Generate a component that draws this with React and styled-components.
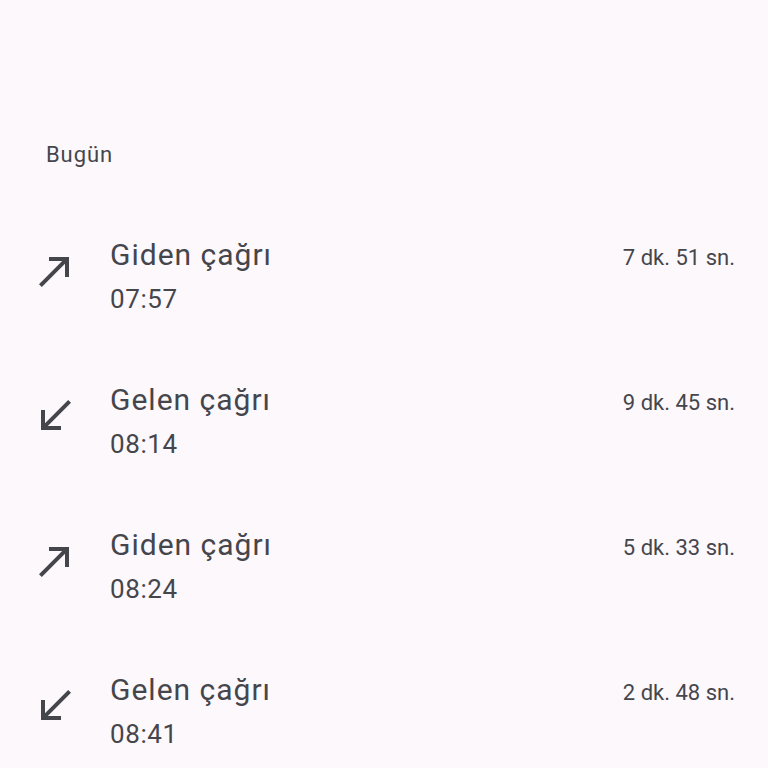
import React from 'react'
import styled, { createGlobalStyle } from 'styled-components'

const calls = [
    { type: 'out', label: 'Giden çağrı', time: '07:57', duration: '7 dk. 51 sn.' },
    { type: 'in', label: 'Gelen çağrı', time: '08:14', duration: '9 dk. 45 sn.' },
    { type: 'out', label: 'Giden çağrı', time: '08:24', duration: '5 dk. 33 sn.' },
    { type: 'in', label: 'Gelen çağrı', time: '08:41', duration: '2 dk. 48 sn.' },
]

const GlobalStyle = createGlobalStyle`
body {
    margin: 0;
    background: #fcf8fc;
    font-family: Roboto, "Noto Sans", sans-serif;
    color: #45464c;
}
`

const CallIcon = ({ type }) => (
    <IconBox viewBox="0 0 24 24">
        {type === 'out'
            ? <path d="M9 5v2h6.59L4 18.59 5.41 20 17 8.41V15h2V5z" />
            : <path d="M20 5.41 18.59 4 7 15.59V9H5v10h10v-2H8.41z" />}
    </IconBox>
)

const App = () => {
    return (
        <Page>
            <GlobalStyle />
            <SectionTitle>Bugün</SectionTitle>
            <List>
                {calls.map((call, index) => (
                    <Row key={index}>
                        <CallIcon type={call.type} />
                        <Body>
                            <TopLine>
                                <Title>{call.label}</Title>
                                <Duration>{call.duration}</Duration>
                            </TopLine>
                            <Time>{call.time}</Time>
                        </Body>
                    </Row>
                ))}
            </List>
        </Page>
    )
}

const Page = styled.div`
width: 768px;
min-height: 768px;
padding-top: 143px;
box-sizing: border-box;
`

const SectionTitle = styled.div`
padding-left: 46px;
font-size: 22px;
line-height: 24px;
letter-spacing: 0.9px;
margin-bottom: 70px;
`

const List = styled.div`
display: flex;
flex-direction: column;
gap: 67px;
`

const Row = styled.div`
display: flex;
align-items: flex-start;
padding: 0 33px 0 31px;
gap: 31px;
`

const IconBox = styled.svg`
width: 48px;
height: 48px;
flex-shrink: 0;
margin-top: 10px;
fill: #45464c;
`

const Body = styled.div`
flex: 1;
display: flex;
flex-direction: column;
`

const TopLine = styled.div`
display: flex;
justify-content: space-between;
align-items: baseline;
`

const Title = styled.span`
font-size: 30px;
line-height: 36px;
letter-spacing: 1px;
`

const Duration = styled.span`
font-size: 22px;
`

const Time = styled.span`
font-size: 26px;
line-height: 32px;
letter-spacing: 0.6px;
margin-top: 10px;
`

export default App
